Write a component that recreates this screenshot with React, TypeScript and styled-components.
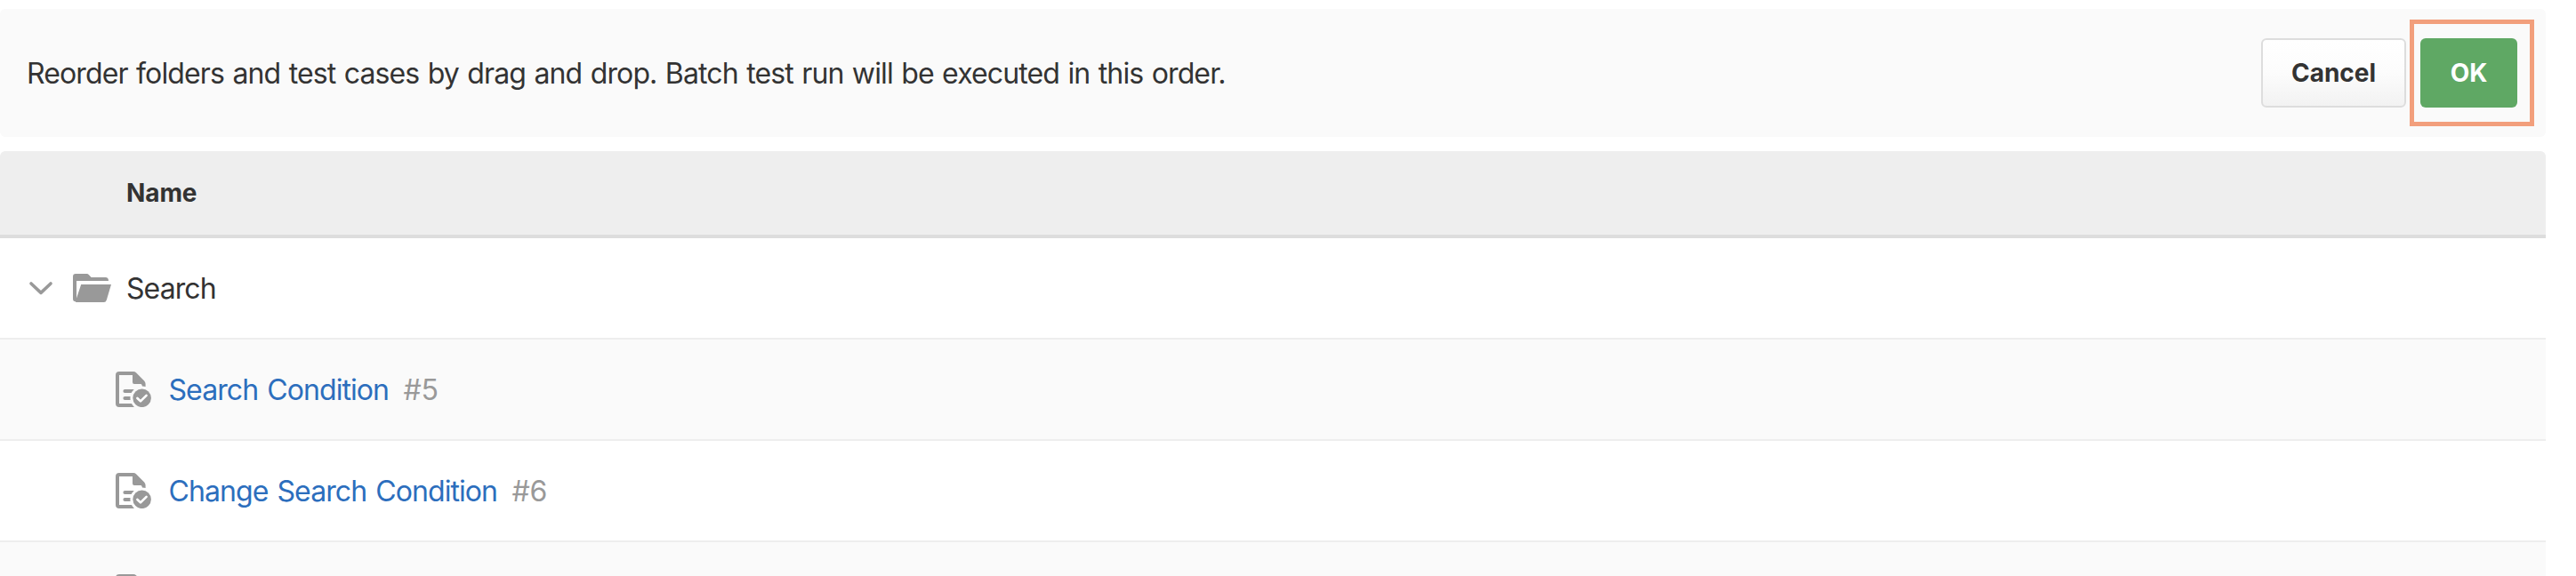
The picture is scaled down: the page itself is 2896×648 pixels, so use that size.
import React from "react";
import styled, { createGlobalStyle } from "styled-components";

interface TestCase {
  id?: number;
  name?: string;
}

interface Folder {
  name: string;
  cases: TestCase[];
}

// the last case has no title yet
const folder: Folder = {
  name: "Search",
  cases: [{ id: 5, name: "Search Condition" }, { id: 6, name: "Change Search Condition" }, {}]
};

const ChevronIcon: React.FC = () => (
  <svg width="28" height="18" viewBox="0 0 28 18" fill="none">
    <path
      d="M3 4 L14 14.4 L25 4"
      stroke="#999"
      strokeWidth="3.6"
      strokeLinecap="round"
      strokeLinejoin="round"
    />
  </svg>
);

const FolderIcon: React.FC = () => (
  <svg width="43" height="32" viewBox="0 0 43 32" fill="#999">
    <path d="M3 0 H15.5 Q17 0 18 1.2 L20.6 4 H36.5 Q40 4 40 8 H4 V27 L4.6 31 Q0 32 0 28 V3 Q0 0 3 0 Z" />
    <path d="M9.2 12 H43 L37.8 29.5 Q37 32 34.8 32 H3 L4 27.5 Z" />
  </svg>
);

const CaseIcon: React.FC = () => (
  <svg width="40" height="40" viewBox="0 0 40 40">
    <mask id="case-cut" maskUnits="userSpaceOnUse" x="0" y="0" width="40" height="40">
      <rect width="40" height="40" fill="#fff" />
      <circle cx="29.6" cy="29.8" r="13.2" fill="#000" />
    </mask>
    <g mask="url(#case-cut)" fill="#999">
      <path d="M4 0 H20 Q21.8 0 23 1.2 L32.2 10.4 Q33.6 12 33.6 14 V17 H30 Q29.6 14 28.4 14 H21 Q19 14 19 12 V4 H4 V36 H22 V40 H4 Q0 40 0 36 V4 Q0 0 4 0 Z" />
      <rect x="8.4" y="20" width="16" height="4" rx="2" />
      <rect x="8.4" y="28" width="16" height="4" rx="2" />
    </g>
    <circle cx="29.6" cy="29.8" r="10.3" fill="#999" />
    <path
      d="M24.4 30 L28 33.4 L34.6 26.8"
      fill="none"
      stroke="#fff"
      strokeWidth="2.6"
      strokeLinecap="round"
      strokeLinejoin="round"
    />
  </svg>
);

const App: React.FC = () => {
  return (
    <Page>
      <GlobalStyle />
      <Toolbar>
        <Message>
          Reorder folders and test cases by drag and drop. Batch test run will be executed in this
          order.
        </Message>
        <Actions>
          <Button type="button">Cancel</Button>
          <Highlight>
            <Button type="button" $primary>
              OK
            </Button>
          </Highlight>
        </Actions>
      </Toolbar>
      <TableHeader>Name</TableHeader>
      <Row>
        <Toggle>
          <ChevronIcon />
        </Toggle>
        <FolderIcon />
        <FolderName>{folder.name}</FolderName>
      </Row>
      {folder.cases.map((item, index) => (
        <Row key={index} $nested $striped={index % 2 === 0}>
          <CaseIcon />
          {item.name && <CaseLink href="#">{item.name}</CaseLink>}
          {item.id && <CaseNumber>#{item.id}</CaseNumber>}
        </Row>
      ))}
    </Page>
  );
};

const GlobalStyle = createGlobalStyle`
  * {
    box-sizing: border-box;
  }

  body {
    margin: 0;
    background-color: #fff;
    color: #333;
    font-family: Inter, "Liberation Sans", sans-serif;
    font-size: 32px;
  }
`;

const Page = styled.div`
  height: 648px;
  padding: 10px 34px 0 0;
  overflow: hidden;
`;

const Toolbar = styled.div`
  display: flex;
  justify-content: space-between;
  align-items: center;
  height: 144px;
  margin-bottom: 16px;
  padding: 0 13px 0 30px;
  border-radius: 6px;
  background-color: #fafafa;
`;

const Message = styled.div`
  letter-spacing: -0.87px;
  word-spacing: 1.25px;
  white-space: nowrap;
`;

const Actions = styled.div`
  display: flex;
  align-items: center;
  gap: 4px;
`;

const Button = styled.button<{ $primary?: boolean }>`
  width: ${({ $primary }) => ($primary ? 109 : 163)}px;
  height: 78px;
  padding: 0;
  border: ${({ $primary }) => ($primary ? "none" : "2px solid #ddd")};
  border-radius: 6px;
  background: ${({ $primary }) =>
    $primary ? "#5fa864" : "linear-gradient(#fff, #fcfcfc 50%, #f2f2f2)"};
  color: ${({ $primary }) => ($primary ? "#fff" : "#333")};
  font-family: inherit;
  font-size: 28px;
  font-weight: 700;
`;

const Highlight = styled.div`
  display: flex;
  align-items: center;
  height: 120px;
  padding: 0 14px 0 7px;
  border: 5px solid #f29f7c;
`;

const TableHeader = styled.div`
  display: flex;
  align-items: center;
  height: 98px;
  padding-left: 142px;
  border-bottom: 4px solid #ddd;
  border-radius: 6px 6px 0 0;
  background-color: #eee;
  font-size: 28px;
  font-weight: 700;
  letter-spacing: -0.1px;
`;

const Row = styled.div<{ $nested?: boolean; $striped?: boolean }>`
  display: flex;
  align-items: center;
  height: 114px;
  padding-left: ${({ $nested }) => ($nested ? 130 : 32)}px;
  border-bottom: 2px solid #eee;
  background-color: ${({ $striped }) => ($striped ? "#fafafa" : "#fff")};
  letter-spacing: -0.92px;
  white-space: nowrap;

  svg {
    flex-shrink: 0;
  }
`;

const Toggle = styled.div`
  display: flex;
  width: 50px;
`;

const FolderName = styled.span`
  margin-left: 17px;
`;

const CaseLink = styled.a`
  margin-left: 19.5px;
  color: #2c6ebd;
  text-decoration: none;
  word-spacing: 2px;
`;

const CaseNumber = styled.span`
  margin-left: 16.5px;
  color: #999;
  letter-spacing: -0.4px;
`;

export default App;
